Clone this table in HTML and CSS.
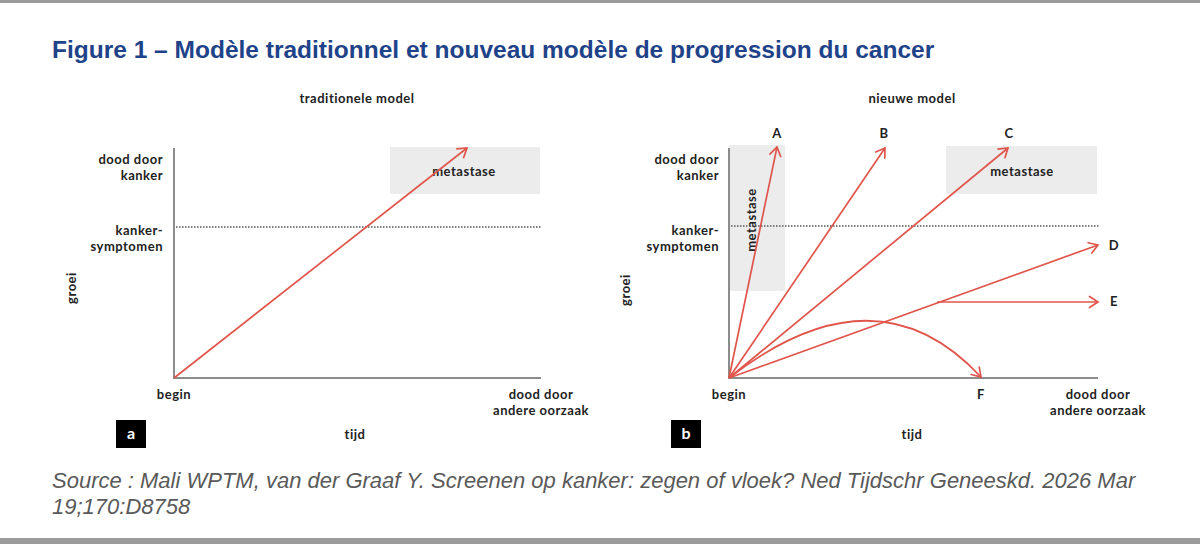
FILE: index.html
```html
<!DOCTYPE html>
<html lang="fr">
<head>
<meta charset="utf-8">
<title>Figure 1</title>
<link rel="stylesheet" href="styles.css">
</head>
<body>
<div class="rule rule-top"></div>
<main class="content">
  <h1 class="title">Figure 1 – Modèle traditionnel et nouveau modèle de progression du cancer</h1>
  <div class="figure">
    <svg class="panel" viewBox="52 85 550 370" width="550" height="370" xmlns="http://www.w3.org/2000/svg">
      <defs>
        <marker id="ah-a" markerUnits="userSpaceOnUse" markerWidth="14" markerHeight="14" viewBox="0 0 14 14" refX="12" refY="7" orient="auto">
          <path class="head" d="M3.5 1.5 L12 7 L3.5 12.5"/>
        </marker>
      </defs>
      <text class="lbl" x="357" y="103" text-anchor="middle">traditionele model</text>
      <rect class="zone" x="390" y="147" width="150" height="47"/>
      <text class="lbl" x="464" y="176" text-anchor="middle">metastase</text>
      <line class="dots" x1="176" y1="227" x2="541" y2="227"/>
      <polyline class="axis" points="174,148 174,378 541,378"/>
      <line class="arrow" x1="174" y1="378" x2="467" y2="148" marker-end="url(#ah-a)"/>
      <text class="lbl" x="163" y="164" text-anchor="end">dood door</text>
      <text class="lbl" x="163" y="180" text-anchor="end">kanker</text>
      <text class="lbl" x="163" y="235" text-anchor="end">kanker-</text>
      <text class="lbl" x="163" y="251" text-anchor="end">symptomen</text>
      <text class="lbl" x="72" y="292" text-anchor="middle" transform="rotate(-90 72 288)">groei</text>
      <text class="lbl" x="174" y="399" text-anchor="middle">begin</text>
      <text class="lbl" x="541" y="399" text-anchor="middle">dood door</text>
      <text class="lbl" x="541" y="415" text-anchor="middle">andere oorzaak</text>
      <rect class="tag" x="116" y="420" width="30" height="28"/>
      <text class="tag-text" x="131" y="439" text-anchor="middle">a</text>
      <text class="lbl" x="355" y="439" text-anchor="middle">tijd</text>
    </svg>
    <svg class="panel" viewBox="602 85 550 370" width="550" height="370" xmlns="http://www.w3.org/2000/svg">
      <defs>
        <marker id="ah-b" markerUnits="userSpaceOnUse" markerWidth="14" markerHeight="14" viewBox="0 0 14 14" refX="12" refY="7" orient="auto">
          <path class="head" d="M3.5 1.5 L12 7 L3.5 12.5"/>
        </marker>
      </defs>
      <text class="lbl" x="912" y="103" text-anchor="middle">nieuwe model</text>
      <rect class="zone" x="729" y="145" width="56" height="146"/>
      <rect class="zone" x="946" y="146" width="151" height="48"/>
      <text class="lbl" x="1022" y="176" text-anchor="middle">metastase</text>
      <text class="lbl" x="752" y="224" text-anchor="middle" transform="rotate(-90 752 220)">metastase</text>
      <line class="dots" x1="731" y1="226" x2="1099" y2="226"/>
      <polyline class="axis" points="729,148 729,378 1098,378"/>
      <line class="arrow" x1="729" y1="378" x2="777" y2="147" marker-end="url(#ah-b)"/>
      <line class="arrow" x1="729" y1="378" x2="885" y2="148" marker-end="url(#ah-b)"/>
      <line class="arrow" x1="729" y1="378" x2="1008" y2="148" marker-end="url(#ah-b)"/>
      <line class="arrow" x1="729" y1="378" x2="1098" y2="245" marker-end="url(#ah-b)"/>
      <line class="arrow" x1="937" y1="302" x2="1098" y2="302" marker-end="url(#ah-b)"/>
      <path class="arrow" d="M729 378 Q876 264 981 377" marker-end="url(#ah-b)"/>
      <text class="lbl" x="777" y="138" text-anchor="middle">A</text>
      <text class="lbl" x="884" y="138" text-anchor="middle">B</text>
      <text class="lbl" x="1009" y="138" text-anchor="middle">C</text>
      <text class="lbl" x="1114" y="250" text-anchor="middle">D</text>
      <text class="lbl" x="1114" y="306" text-anchor="middle">E</text>
      <text class="lbl" x="981" y="399" text-anchor="middle">F</text>
      <text class="lbl" x="719" y="164" text-anchor="end">dood door</text>
      <text class="lbl" x="719" y="180" text-anchor="end">kanker</text>
      <text class="lbl" x="719" y="235" text-anchor="end">kanker-</text>
      <text class="lbl" x="719" y="251" text-anchor="end">symptomen</text>
      <text class="lbl" x="626" y="294" text-anchor="middle" transform="rotate(-90 626 290)">groei</text>
      <text class="lbl" x="729" y="399" text-anchor="middle">begin</text>
      <text class="lbl" x="1098" y="399" text-anchor="middle">dood door</text>
      <text class="lbl" x="1098" y="415" text-anchor="middle">andere oorzaak</text>
      <rect class="tag" x="671" y="420" width="30" height="28"/>
      <text class="tag-text" x="686" y="439" text-anchor="middle">b</text>
      <text class="lbl" x="912" y="439" text-anchor="middle">tijd</text>
    </svg>
  </div>
  <p class="source">Source : Mali WPTM, van der Graaf Y. Screenen op kanker: zegen of vloek? Ned Tijdschr Geneeskd. 2026 Mar 19;170:D8758</p>
</main>
<div class="rule rule-bottom"></div>
</body>
</html>
```

FILE: styles.css
```css
html, body {
  margin: 0;
  padding: 0;
  background: #ffffff;
}

body {
  width: 1200px;
  height: 544px;
  display: flex;
  flex-direction: column;
  overflow: hidden;
  font-family: "Liberation Sans", Arial, sans-serif;
}

.rule {
  background: #9b9b9b;
  flex: none;
}

.rule-top {
  height: 3px;
}

.rule-bottom {
  height: 6px;
}

.content {
  flex: 1;
  padding: 33px 0 0 52px;
  display: flex;
  flex-direction: column;
}

.title {
  margin: 0;
  font-size: 24.5px;
  line-height: 28px;
  font-weight: 700;
  color: #1f4389;
}

.figure {
  display: flex;
  margin-top: 21px;
}

.panel {
  display: block;
  flex: none;
}

.lbl {
  font-family: Lato, "Noto Sans", sans-serif;
  font-weight: 700;
  font-size: 13px;
  letter-spacing: 0.5px;
  fill: #222222;
}

.tag {
  fill: #000000;
}

.tag-text {
  font-family: Lato, "Noto Sans", sans-serif;
  font-weight: 700;
  font-size: 16px;
  fill: #ffffff;
}

.zone {
  fill: #ececec;
}

.axis {
  fill: none;
  stroke: #8c8c8c;
  stroke-width: 2;
}

.dots {
  stroke: #555555;
  stroke-width: 1.5;
  stroke-dasharray: 1.5 1.5;
}

.arrow {
  fill: none;
  stroke: #e0554b;
  stroke-width: 1.7;
}

.head {
  fill: none;
  stroke: #e0554b;
  stroke-width: 1.7;
  stroke-linecap: round;
  stroke-linejoin: miter;
}

.source {
  margin: 13px 0 0;
  max-width: 1100px;
  font-size: 22px;
  line-height: 26px;
  font-style: italic;
  color: #5a5a5a;
}
```
